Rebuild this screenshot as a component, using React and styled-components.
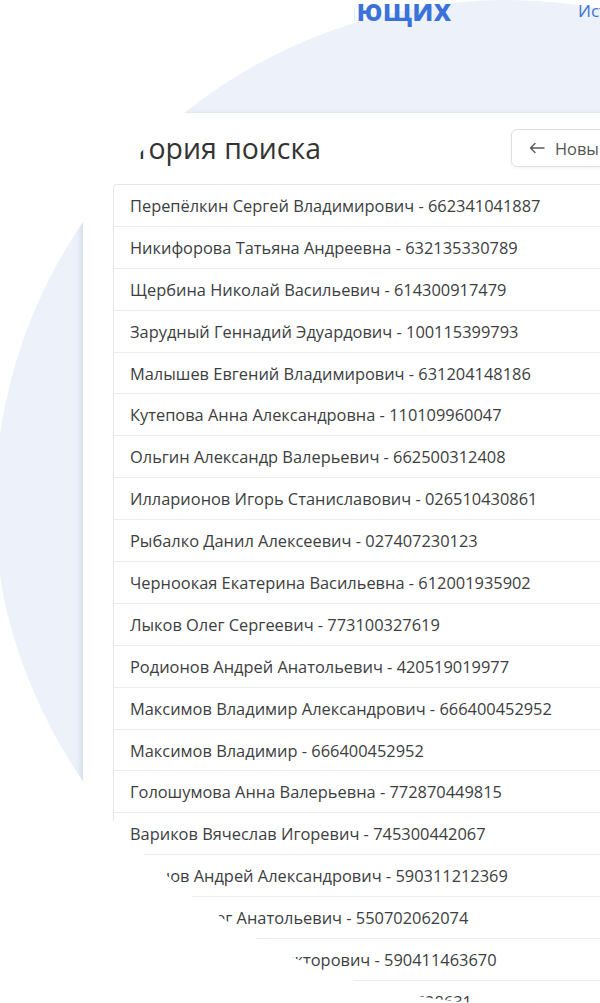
import React from "react";
import styled, { createGlobalStyle } from "styled-components";

const Global = createGlobalStyle`
  html, body { margin: 0; padding: 0; background: #ffffff; }
  body { font-family: "Open Sans", "Noto Sans", sans-serif; -webkit-font-smoothing: antialiased; }
`;

const Stage = styled.div`
  position: relative;
  width: 600px;
  height: 1003px;
  overflow: hidden;
  background: #ffffff;
`;

const Backdrop = styled.div`
  margin-left: -5px;
  width: 1024px;
  height: 1010px;
  border-radius: 50%;
  overflow: hidden;
  background: #edf2fa;
  padding: 113px 0 0 88px;
  box-sizing: border-box;
  clip-path: circle(515px at 512px 489px);
`;

const Panel = styled.section`
  width: 720px;
  height: 1000px;
  background: #ffffff;
  box-shadow: -3px 0 6px -1px rgba(70, 95, 140, 0.16);
  padding: 16px 0 0 17px;
  box-sizing: border-box;
`;

const Header = styled.div`
  display: flex;
  align-items: center;
  width: 587px;
  height: 38px;
`;

const Title = styled.h1`
  margin: 0;
  font-size: 28.4px;
  font-weight: 400;
  line-height: 1.2;
  color: #333333;
  white-space: nowrap;
`;

const NewButton = styled.button`
  margin-left: auto;
  width: 176px;
  height: 38px;
  display: flex;
  align-items: center;
  gap: 10px;
  padding: 0 17px;
  box-sizing: border-box;
  background: #ffffff;
  border: 1px solid #dcdfe4;
  border-radius: 6px;
  box-shadow: 0 1px 3px rgba(0, 0, 0, 0.06);
  font-family: inherit;
  font-size: 16.4px;
  color: #555555;
  white-space: nowrap;
`;

const ArrowIcon = styled.svg`
  width: 16px;
  height: 12px;
  flex: none;
`;

const List = styled.ul`
  list-style: none;
  margin: 17px 0 0 13px;
  padding: 0;
  width: 600px;
  border: 1px solid #e5e6e8;
  border-bottom: none;
  border-radius: 4px 0 0 0;
`;

const Row = styled.li`
  height: 41.9px;
  box-sizing: border-box;
  display: flex;
  align-items: center;
  padding: 0 16px;
  border-bottom: 1px solid #ebecee;
  font-size: 16.4px;
  color: #3c3e41;
  white-space: nowrap;
`;

const TopBar = styled.div`
  position: absolute;
  top: 0;
  left: 0;
  right: 0;
  height: 40px;
`;

const Brand = styled.div`
  position: absolute;
  top: -10px;
  left: 354px;
  width: 97px;
  overflow: hidden;
  display: flex;
  justify-content: flex-end;
  font-size: 30px;
  font-weight: 700;
  line-height: 40px;
  color: #3b72d9;
  white-space: nowrap;
`;

const NavLink = styled.a`
  position: absolute;
  top: 0;
  left: 578px;
  font-size: 17px;
  line-height: 22px;
  color: #3b72d9;
  text-decoration: none;
  white-space: nowrap;
`;

const items = [
  "Перепёлкин Сергей Владимирович - 662341041887",
  "Никифорова Татьяна Андреевна - 632135330789",
  "Щербина Николай Васильевич - 614300917479",
  "Зарудный Геннадий Эдуардович - 100115399793",
  "Малышев Евгений Владимирович - 631204148186",
  "Кутепова Анна Александровна - 110109960047",
  "Ольгин Александр Валерьевич - 662500312408",
  "Илларионов Игорь Станиславович - 026510430861",
  "Рыбалко Данил Алексеевич - 027407230123",
  "Черноокая Екатерина Васильевна - 612001935902",
  "Лыков Олег Сергеевич - 773100327619",
  "Родионов Андрей Анатольевич - 420519019977",
  "Максимов Владимир Александрович - 666400452952",
  "Максимов Владимир - 666400452952",
  "Голошумова Анна Валерьевна - 772870449815",
  "Вариков Вячеслав Игоревич - 745300442067",
  "Кочнов Андрей Александрович - 590311212369",
  "Попков Олег Анатольевич - 550702062074",
  "Кузнецов Андрей Викторович - 590411463670",
  "Смирнова Ольга Петровна - 590402628631",
  "Соколов Павел Игоревич - 590100112233",
];

export default function App() {
  return (
    <>
      <Global />
      <Stage>
        <Backdrop>
          <Panel>
            <Header>
              <Title>История поиска</Title>
              <NewButton>
                <ArrowIcon viewBox="0 0 16 12" fill="none" stroke="#5a5a5a" strokeWidth="1.4" strokeLinecap="round" strokeLinejoin="round">
                  <path d="M15 6H1.5M6 1.5L1.5 6L6 10.5" />
                </ArrowIcon>
                Новый поиск
              </NewButton>
            </Header>
            <List>
              {items.map((t, i) => (
                <Row key={i}>{t}</Row>
              ))}
            </List>
          </Panel>
        </Backdrop>
        <TopBar>
          <Brand>работающих</Brand>
          <NavLink href="#">История</NavLink>
        </TopBar>
      </Stage>
    </>
  );
}
